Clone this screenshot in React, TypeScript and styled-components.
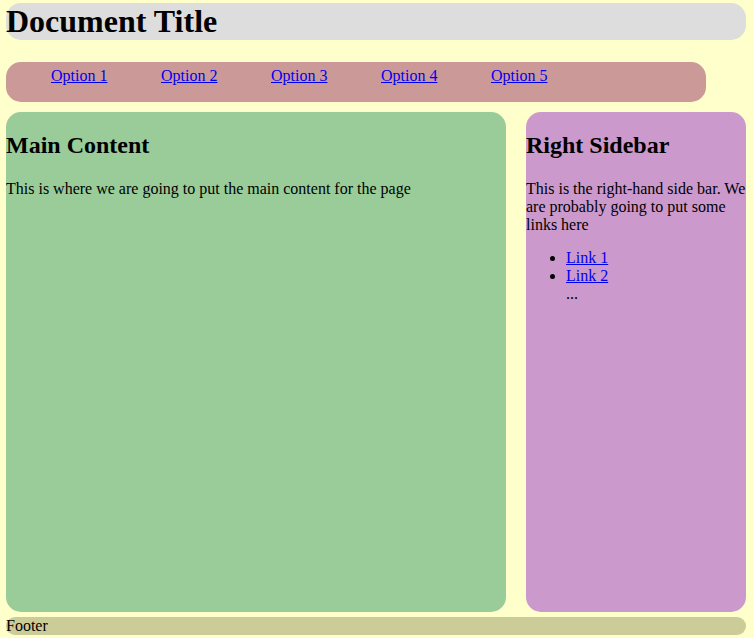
import React from "react";
import styled, { createGlobalStyle } from "styled-components";

const GlobalStyle = createGlobalStyle`
  html, body {
    margin: 0;
    padding: 0;
    background: #ffffcc;
    font-family: "Liberation Serif", "Times New Roman", serif;
    font-size: 16px;
    color: #000;
  }
  a { color: #0000ee; }
`;

const Page = styled.div`
  width: 740px;
  padding: 3px 0 0 6px;
  display: flex;
  flex-direction: column;
`;

const Header = styled.header`
  background: #dddddd;
  border-radius: 15px;
  height: 37px;
`;

const Title = styled.h1`
  margin: 0;
  font-size: 32px;
  font-weight: bold;
  line-height: 37px;
`;

const Nav = styled.nav`
  margin-top: 22px;
  width: 700px;
  height: 40px;
  box-sizing: border-box;
  background: #cc9999;
  border-radius: 15px;
  padding: 5px 0 0 45px;
  display: flex;
`;

const NavItem = styled.a`
  width: 110px;
  line-height: 18px;
  font-size: 16px;
`;

const Content = styled.div`
  margin-top: 10px;
  display: grid;
  grid-template-columns: 500px 220px;
  column-gap: 20px;
  height: 500px;
`;

const Panel = styled.section<{ $bg: string }>`
  background: ${(p) => p.$bg};
  border-radius: 15px;
  overflow: hidden;
  padding-top: 0.1px;
`;

const Heading = styled.h2`
  font-size: 24px;
  font-weight: bold;
  margin: 19px 0 0;
  line-height: 28px;
`;

const Para = styled.p`
  margin: 21px 0 0;
  line-height: 18px;
`;

const List = styled.ul`
  margin: 15px 0 0;
  padding-left: 40px;
  line-height: 18px;
`;

const Item = styled.li<{ $plain?: boolean }>`
  list-style: ${(p) => (p.$plain ? "none" : "disc")};
`;

const Footer = styled.footer`
  margin-top: 5px;
  height: 18px;
  line-height: 18px;
  background: #cccc99;
  border-radius: 15px;
`;

export default function App() {
  return (
    <>
      <GlobalStyle />
      <Page>
        <Header>
          <Title>Document Title</Title>
        </Header>
        <Nav>
          {["Option 1", "Option 2", "Option 3", "Option 4", "Option 5"].map((o) => (
            <NavItem key={o} href="#">
              {o}
            </NavItem>
          ))}
        </Nav>
        <Content>
          <Panel $bg="#99cc99">
            <Heading>Main Content</Heading>
            <Para>This is where we are going to put the main content for the page</Para>
          </Panel>
          <Panel $bg="#cc99cc">
            <Heading>Right Sidebar</Heading>
            <Para>
              This is the right-hand side bar. We are probably going to put some links here
            </Para>
            <List>
              <Item>
                <a href="#">Link 1</a>
              </Item>
              <Item>
                <a href="#">Link 2</a>
              </Item>
              <Item $plain>...</Item>
            </List>
          </Panel>
        </Content>
        <Footer>Footer</Footer>
      </Page>
    </>
  );
}
